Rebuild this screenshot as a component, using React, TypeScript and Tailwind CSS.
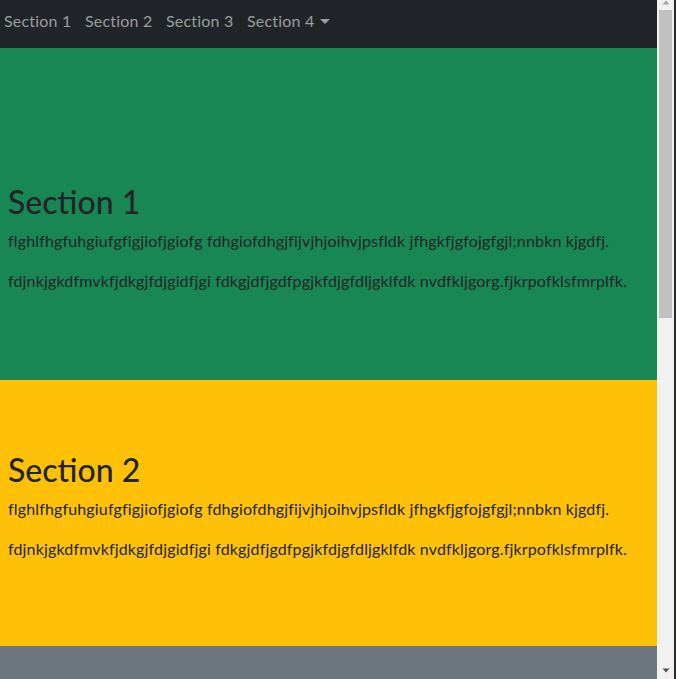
const P1 = "flghlfhgfuhgiufgfigjiofjgiofg fdhgiofdhgjfijvjhjoihvjpsfldk jfhgkfjgfojgfgjl;nnbkn kjgdfj.";
const P2 = "fdjnkjgkdfmvkfjdkgjfdjgidfjgi fdkgjdfjgdfpgjkfdjgfdljgklfdk nvdfkljgorg.fjkrpofklsfmrplfk.";

function Section({ title, bg, h, pt }: { title: string; bg: string; h: string; pt: string }) {
  return (
    <section className={`${bg} ${h} ${pt} px-[8px] shrink-0`}>
      <h1 className="text-[32px] leading-[38.4px] font-medium mb-[8px] text-[#212529]">{title}</h1>
      <p className="text-[16px] leading-[24px] mb-[16px] tracking-[0.15px] text-[#212529]">{P1}</p>
      <p className="text-[16px] leading-[24px] mb-[16px] tracking-[0.15px] text-[#212529]">{P2}</p>
    </section>
  );
}

export default function App() {
  return (
    <div className="flex h-[679px] w-[676px] overflow-hidden" style={{ fontFamily: 'Lato, "Liberation Sans", sans-serif' }}>
      <div className="flex flex-col w-[657px] shrink-0 overflow-hidden">
        <nav className="h-[48px] bg-[#212529] flex items-start pl-[4px] pt-[9px] gap-[17px] shrink-0">
          {["Section 1", "Section 2", "Section 3"].map((s) => (
            <a key={s} className="text-[16px] leading-[24px] text-[#9b9d9f] w-[64px] whitespace-nowrap tracking-[0.2px]">{s}</a>
          ))}
          <a className="text-[16px] leading-[24px] text-[#9b9d9f] flex items-center whitespace-nowrap tracking-[0.2px]">
            <span className="w-[64px]">Section 4</span>
            <span className="ml-[9px] w-0 h-0 border-l-[5px] border-r-[5px] border-t-[5px] border-l-transparent border-r-transparent border-t-[#9b9d9f]"></span>
          </a>
        </nav>
        <Section title="Section 1" bg="bg-[#198754]" h="h-[332px]" pt="pt-[135px]" />
        <Section title="Section 2" bg="bg-[#ffc107]" h="h-[266px]" pt="pt-[71px]" />
        <div className="bg-[#6c757d] flex-1"></div>
      </div>
      <div className="w-[17px] bg-[#f1f1f1] flex flex-col items-center shrink-0">
        <svg width="8" height="10" viewBox="0 0 8 10" className="shrink-0">
          <polygon points="0.5,4.5 4,0.5 7.5,4.5" fill="#a3a3a3" />
        </svg>
        <div className="w-[13px] h-[308px] bg-[#c1c1c1] shrink-0"></div>
        <div className="flex-1"></div>
        <div className="h-[17px] flex items-center justify-center shrink-0">
          <svg width="8" height="5" viewBox="0 0 8 5">
            <polygon points="0.5,0.5 7.5,0.5 4,4.5" fill="#505050" />
          </svg>
        </div>
      </div>
      <div className="w-[2px] bg-[#2b2b2b] shrink-0"></div>
    </div>
  );
}
